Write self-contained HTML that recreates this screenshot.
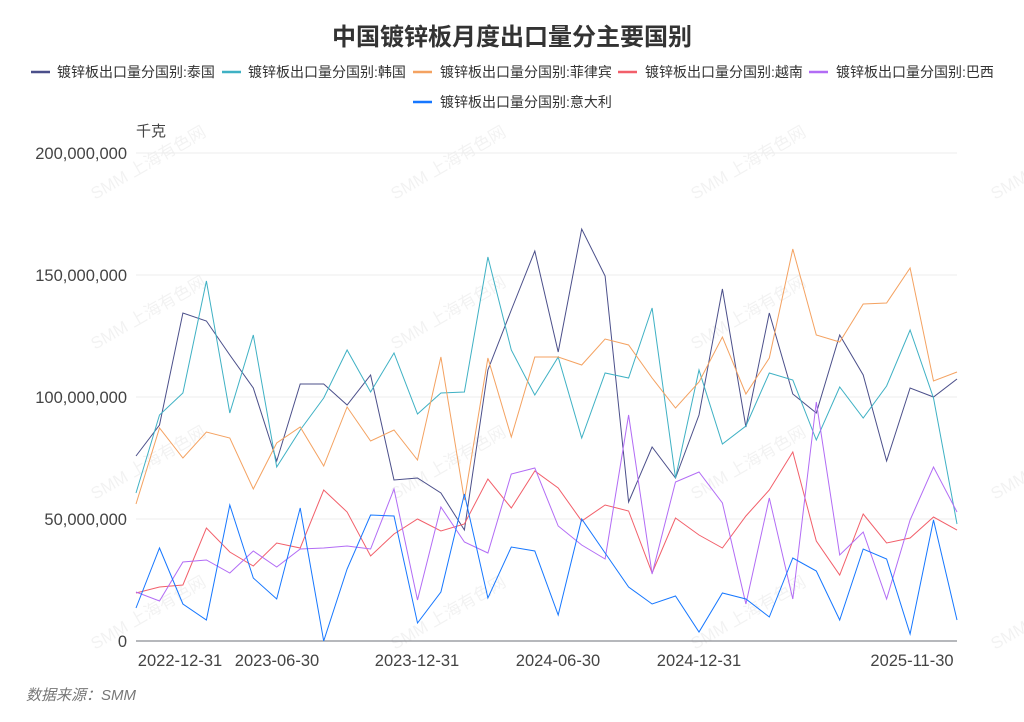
<!DOCTYPE html>
<html><head><meta charset="utf-8"><style>
body{margin:0;width:1024px;height:722px;background:#fff;overflow:hidden;font-family:"Liberation Sans","Noto Sans CJK SC",sans-serif;}
svg{position:absolute;left:0;top:0}
</style></head><body>
<svg id="s" width="1024" height="722" xmlns="http://www.w3.org/2000/svg" font-family="Liberation Sans, Noto Sans CJK SC, sans-serif">
<g fill="#000" fill-opacity="0.05" font-size="17">
<text transform="translate(95,200) rotate(-30)">SMM 上海有色网</text>
<text transform="translate(395,200) rotate(-30)">SMM 上海有色网</text>
<text transform="translate(695,200) rotate(-30)">SMM 上海有色网</text>
<text transform="translate(995,200) rotate(-30)">SMM 上海有色网</text>
<text transform="translate(95,350) rotate(-30)">SMM 上海有色网</text>
<text transform="translate(395,350) rotate(-30)">SMM 上海有色网</text>
<text transform="translate(695,350) rotate(-30)">SMM 上海有色网</text>
<text transform="translate(95,500) rotate(-30)">SMM 上海有色网</text>
<text transform="translate(395,500) rotate(-30)">SMM 上海有色网</text>
<text transform="translate(695,500) rotate(-30)">SMM 上海有色网</text>
<text transform="translate(995,500) rotate(-30)">SMM 上海有色网</text>
<text transform="translate(95,650) rotate(-30)">SMM 上海有色网</text>
<text transform="translate(395,650) rotate(-30)">SMM 上海有色网</text>
<text transform="translate(695,650) rotate(-30)">SMM 上海有色网</text>
<text transform="translate(995,650) rotate(-30)">SMM 上海有色网</text>
</g>
<text x="512" y="45" text-anchor="middle" font-size="24" font-weight="bold" fill="#333">中国镀锌板月度出口量分主要国别</text>
<g font-size="14" fill="#333">
<line x1="31" y1="72" x2="50" y2="72" stroke="#4b4f8a" stroke-width="2.5"/><text x="57" y="77">镀锌板出口量分国别:泰国</text>
<line x1="222" y1="72" x2="241" y2="72" stroke="#3fb1c4" stroke-width="2.5"/><text x="248" y="77">镀锌板出口量分国别:韩国</text>
<line x1="413" y1="72" x2="432" y2="72" stroke="#f4a261" stroke-width="2.5"/><text x="440" y="77">镀锌板出口量分国别:菲律宾</text>
<line x1="618" y1="72" x2="637" y2="72" stroke="#f25f6a" stroke-width="2.5"/><text x="645" y="77">镀锌板出口量分国别:越南</text>
<line x1="809" y1="72" x2="828" y2="72" stroke="#b26cf5" stroke-width="2.5"/><text x="836" y="77">镀锌板出口量分国别:巴西</text>
<line x1="413" y1="102" x2="432" y2="102" stroke="#1677ff" stroke-width="2.5"/><text x="440" y="107">镀锌板出口量分国别:意大利</text>
</g>
<text x="136" y="136" font-size="15" fill="#444">千克</text>
<g stroke="#ececec" stroke-width="1">
<line x1="136" y1="153" x2="957" y2="153"/><line x1="136" y1="275" x2="957" y2="275"/><line x1="136" y1="397" x2="957" y2="397"/><line x1="136" y1="519" x2="957" y2="519"/>
</g>
<line x1="136" y1="641" x2="957" y2="641" stroke="#6e7079"/>
<g font-size="16.5" fill="#444" text-anchor="end">
<text x="127" y="159">200,000,000</text><text x="127" y="281">150,000,000</text><text x="127" y="403">100,000,000</text><text x="127" y="525">50,000,000</text><text x="127" y="647">0</text>
</g>
<g font-size="16.5" fill="#444" text-anchor="middle">
<text x="180" y="666">2022-12-31</text><text x="277" y="666">2023-06-30</text><text x="417" y="666">2023-12-31</text><text x="558" y="666">2024-06-30</text><text x="699" y="666">2024-12-31</text><text x="912" y="666">2025-11-30</text>
</g>
<text x="26" y="700" font-size="15" font-style="italic" fill="#777">数据来源：SMM</text>
<g id="lines" fill="none" stroke-width="1"></g>
</svg>
<script>
var D=[
["#4b4f8a",[456,425,313,321,355,388,461,384,384,405,375,480,478,493,530,370,310,251,352,229,276,502,447,478,415,289,427,313,394,413,335,375,461,388,397,379]],
["#3fb1c4",[493,415,393,281,413,335,467,430,398,350,392,353,414,393,392,257,350,395,357,438,373,378,308,478,370,444,426,373,380,440,387,418,386,330,398,524]],
["#f4a261",[504,428,458,432,438,489,443,427,466,407,441,430,460,357,500,358,437,357,357,365,339,345,378,408,382,337,394,358,249,335,342,304,303,268,381,372]],
["#f25f6a",[593,587,585,528,552,566,543,548,490,512,556,534,519,531,524,479,508,471,488,521,505,511,573,518,535,548,516,490,452,541,575,514,543,538,517,530]],
["#b26cf5",[592,601,562,560,573,551,567,549,548,546,549,489,600,507,542,553,474,468,526,545,559,415,574,482,472,503,604,498,599,402,555,532,599,520,467,512]],
["#1677ff",[608,548,604,620,505,578,599,508,641,569,515,516,623,592,494,598,547,551,615,519,553,587,604,596,632,593,599,617,558,571,620,549,559,634,520,620]]];
var g=document.getElementById('lines');
D.forEach(function(d){var p=d[1].map(function(y,i){return (136+i*821/35).toFixed(1)+','+y}).join(' ');
var e=document.createElementNS('http://www.w3.org/2000/svg','polyline');e.setAttribute('points',p);e.setAttribute('stroke',d[0]);g.appendChild(e);});
</script>
</body></html>
